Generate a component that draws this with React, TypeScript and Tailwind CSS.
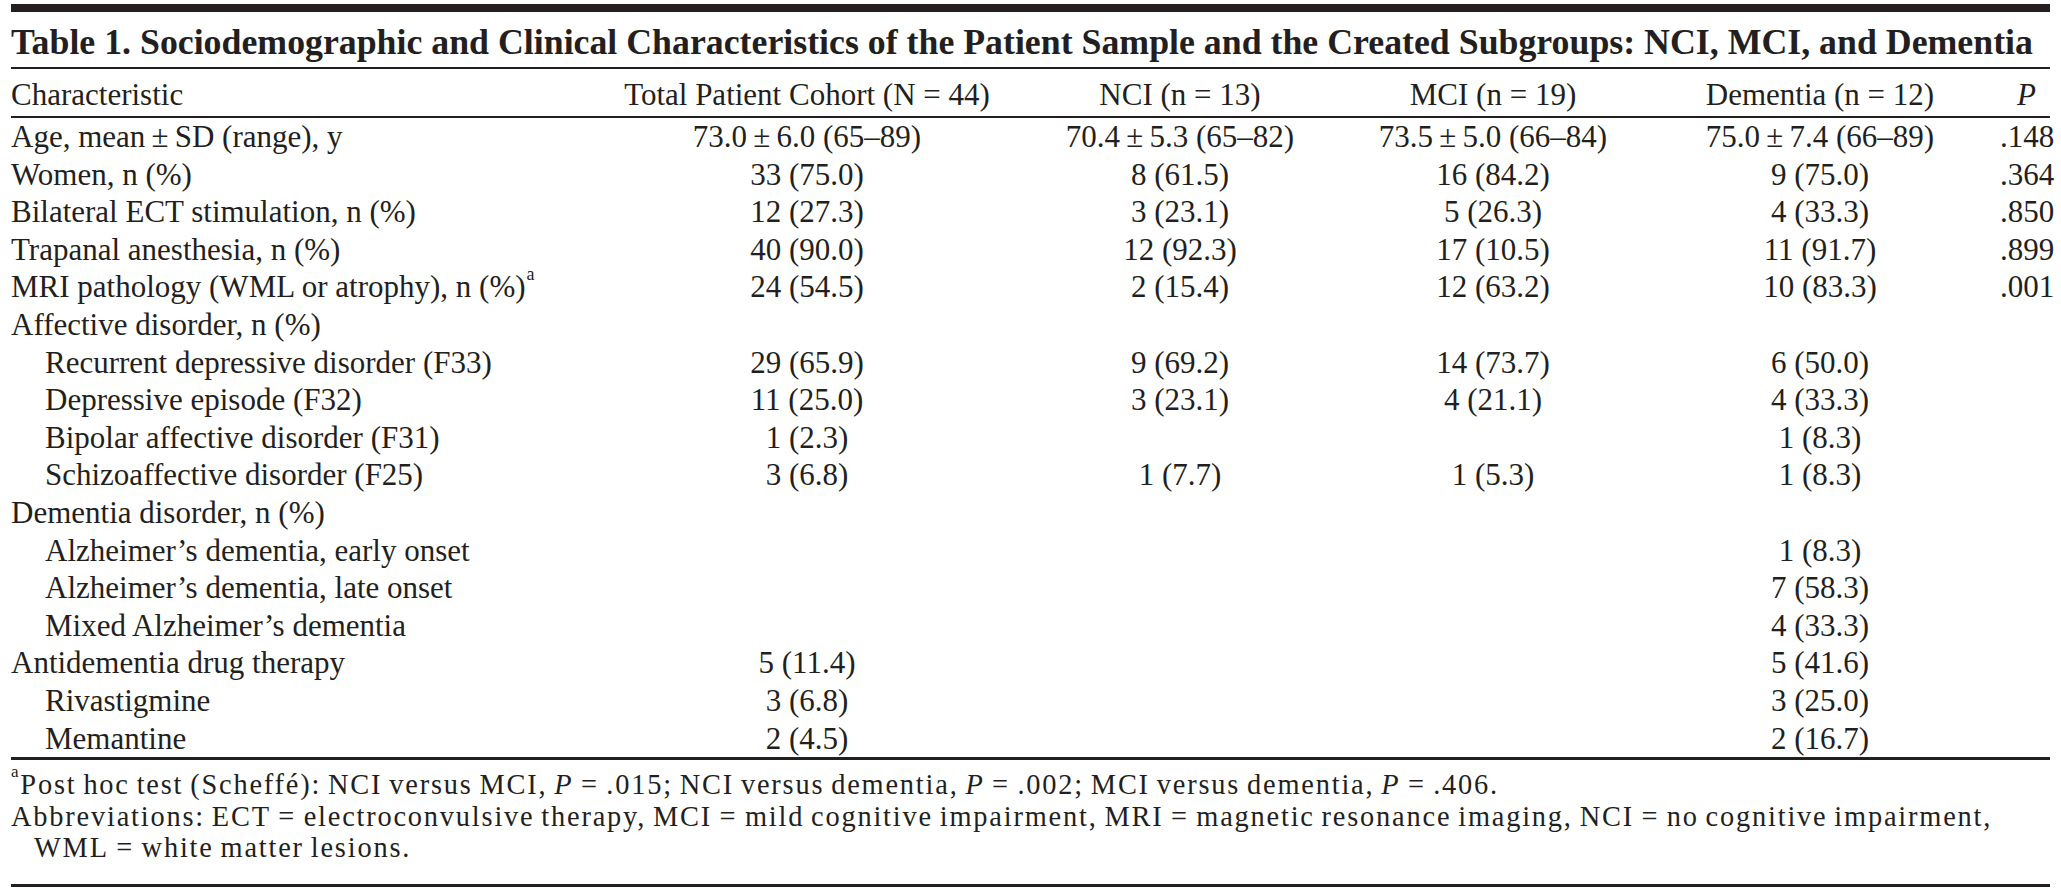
import React from "react"

type Row = {
  label: string
  sup?: string
  indent?: boolean
  total?: string
  nci?: string
  mci?: string
  dem?: string
  p?: string
}

const rows: Row[] = [
  { label: "Age, mean\u2009±\u2009SD (range), y", total: "73.0\u2009±\u20096.0 (65–89)", nci: "70.4\u2009±\u20095.3 (65–82)", mci: "73.5\u2009±\u20095.0 (66–84)", dem: "75.0\u2009±\u20097.4 (66–89)", p: ".148" },
  { label: "Women, n (%)", total: "33 (75.0)", nci: "8 (61.5)", mci: "16 (84.2)", dem: "9 (75.0)", p: ".364" },
  { label: "Bilateral ECT stimulation, n (%)", total: "12 (27.3)", nci: "3 (23.1)", mci: "5 (26.3)", dem: "4 (33.3)", p: ".850" },
  { label: "Trapanal anesthesia, n (%)", total: "40 (90.0)", nci: "12 (92.3)", mci: "17 (10.5)", dem: "11 (91.7)", p: ".899" },
  { label: "MRI pathology (WML or atrophy), n (%)", sup: "a", total: "24 (54.5)", nci: "2 (15.4)", mci: "12 (63.2)", dem: "10 (83.3)", p: ".001" },
  { label: "Affective disorder, n (%)" },
  { label: "Recurrent depressive disorder (F33)", indent: true, total: "29 (65.9)", nci: "9 (69.2)", mci: "14 (73.7)", dem: "6 (50.0)" },
  { label: "Depressive episode (F32)", indent: true, total: "11 (25.0)", nci: "3 (23.1)", mci: "4 (21.1)", dem: "4 (33.3)" },
  { label: "Bipolar affective disorder (F31)", indent: true, total: "1 (2.3)", dem: "1 (8.3)" },
  { label: "Schizoaffective disorder (F25)", indent: true, total: "3 (6.8)", nci: "1 (7.7)", mci: "1 (5.3)", dem: "1 (8.3)" },
  { label: "Dementia disorder, n (%)" },
  { label: "Alzheimer’s dementia, early onset", indent: true, dem: "1 (8.3)" },
  { label: "Alzheimer’s dementia, late onset", indent: true, dem: "7 (58.3)" },
  { label: "Mixed Alzheimer’s dementia", indent: true, dem: "4 (33.3)" },
  { label: "Antidementia drug therapy", total: "5 (11.4)", dem: "5 (41.6)" },
  { label: "Rivastigmine", indent: true, total: "3 (6.8)", dem: "3 (25.0)" },
  { label: "Memantine", indent: true, total: "2 (4.5)", dem: "2 (16.7)" },
]

const grid = "grid grid-cols-[589px_414px_332px_294px_360px_50px]"
const eq = "\u2009=\u2009"

export default function App() {
  return (
    <div className="w-[2061px] h-[890px] bg-white pt-[4px] font-['Liberation_Serif',serif] text-[#231f20]">
      <div className="ml-[11px] w-[2039px]">
        <div className="h-[8px] bg-[#231f20]" />

        <div className="h-[55px] flex items-end pb-[5px]">
          <h1 className="text-[35.8px] leading-[40px] font-bold whitespace-nowrap">
            Table 1. Sociodemographic and Clinical Characteristics of the Patient Sample and the Created Subgroups: NCI, MCI, and Dementia
          </h1>
        </div>
        <div className="h-[2px] bg-[#231f20]" />

        <div className={`${grid} h-[47px] items-end pb-[3px] text-[31px] leading-[36px] whitespace-nowrap`}>
          <div>Characteristic</div>
          <div className="text-center">Total Patient Cohort (N = 44)</div>
          <div className="text-center">NCI (n = 13)</div>
          <div className="text-center">MCI (n = 19)</div>
          <div className="text-center">Dementia (n = 12)</div>
          <div className="text-right pr-[14px] italic">P</div>
        </div>
        <div className="h-[2px] bg-[#231f20]" />

        <div className="text-[31px] leading-[37.6px]">
          {rows.map((r, i) => (
            <div key={i} className={`${grid} h-[37.6px] whitespace-nowrap`}>
              <div className={r.indent ? "pl-[34px]" : ""}>
                {r.label}
                {r.sup && <sup className="text-[18px] align-[8px] leading-none ml-[1px]">{r.sup}</sup>}
              </div>
              <div className="text-center">{r.total}</div>
              <div className="text-center">{r.nci}</div>
              <div className="text-center">{r.mci}</div>
              <div className="text-center">{r.dem}</div>
              <div className="text-right pr-[9px]">{r.p}</div>
            </div>
          ))}
        </div>

        <div className="h-[3px] bg-[#231f20]" />

        {/* footnotes: letter spacing stands in for the wider original face */}
        <div className="pt-[9px] pb-[20px] text-[28.4px] leading-[31.5px] tracking-[1.8px] [word-spacing:-2px] whitespace-nowrap">
          <div>
            <sup className="text-[17px] align-[9px] leading-none">a</sup>
            Post hoc test (Scheffé): NCI versus MCI, <i>P</i>{eq}.015; NCI versus dementia, <i>P</i>{eq}.002; MCI versus dementia, <i>P</i>{eq}.406.
          </div>
          <div>
            Abbreviations: ECT{eq}electroconvulsive therapy, MCI{eq}mild cognitive impairment, MRI{eq}magnetic resonance imaging, NCI{eq}no cognitive impairment,
          </div>
          <div className="pl-[23px]">WML{eq}white matter lesions.</div>
        </div>

        <div className="h-[3px] bg-[#231f20]" />
      </div>
    </div>
  )
}
